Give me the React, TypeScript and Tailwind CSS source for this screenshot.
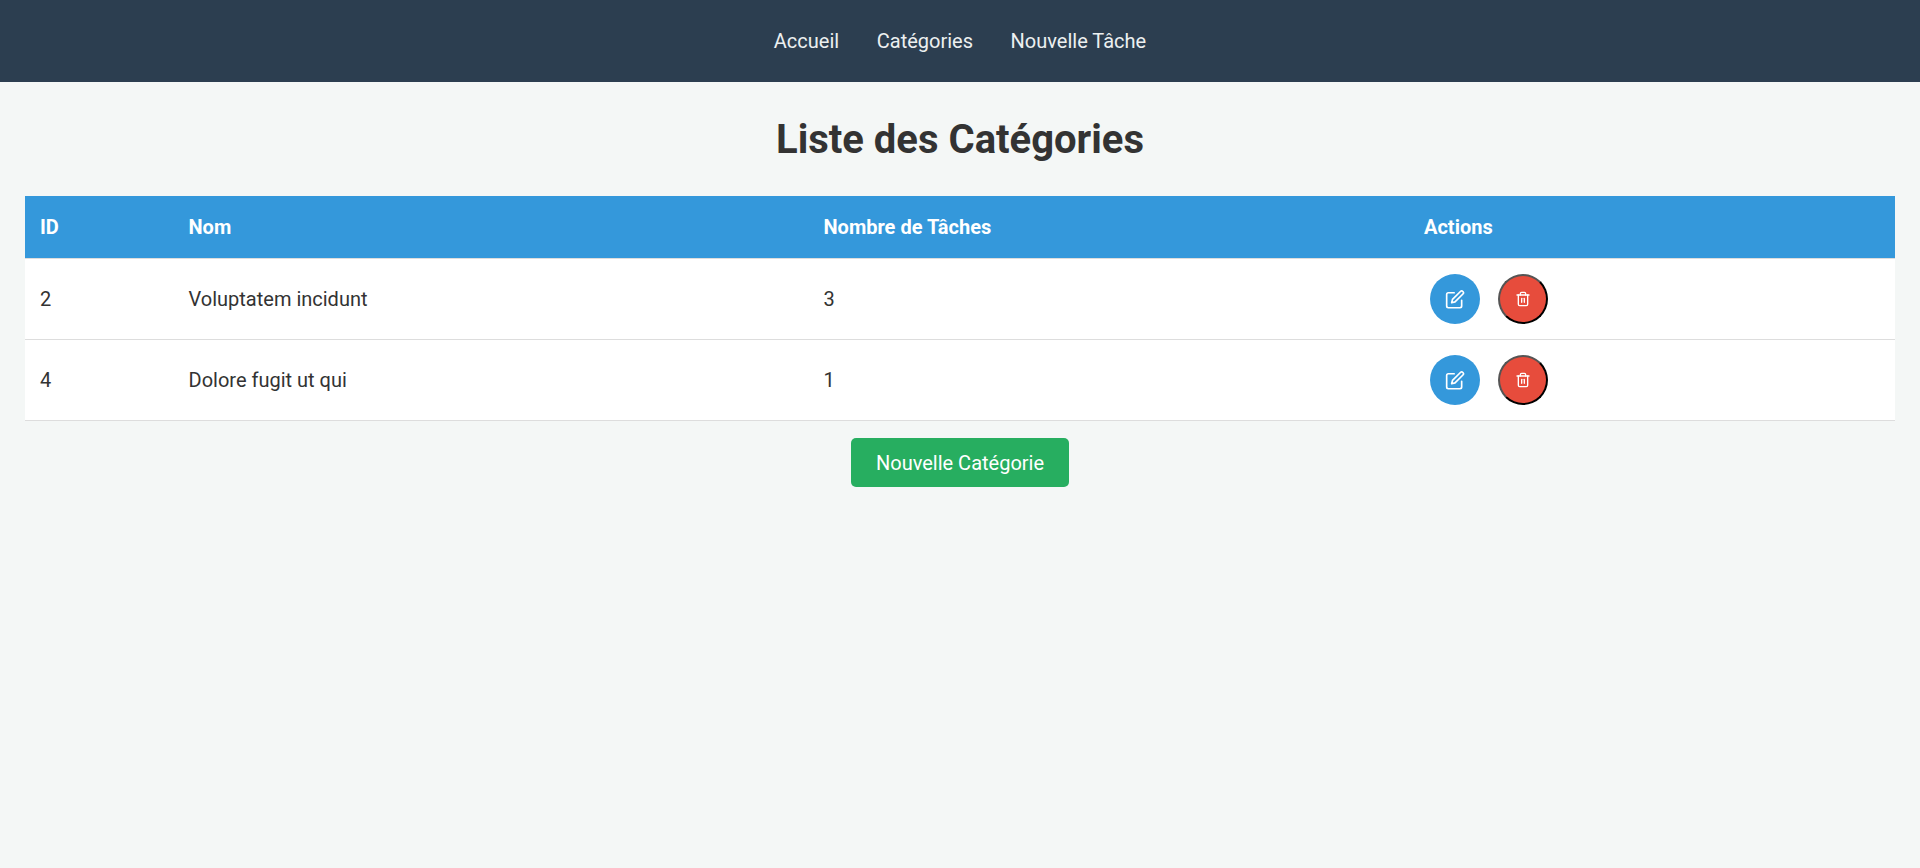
import { FiEdit, FiTrash2 } from "react-icons/fi";

const links = ["Accueil", "Catégories", "Nouvelle Tâche"];

const categories = [
  { id: 2, name: "Voluptatem incidunt", tasks: 3 },
  { id: 4, name: "Dolore fugit ut qui", tasks: 1 },
];

function Navbar() {
  return (
    <nav className="flex h-[82px] items-center justify-center gap-[37.6px] bg-[#2c3e50]">
      {links.map((label) => (
        <a key={label} href="#" className="text-[#ecf0f1]">
          {label}
        </a>
      ))}
    </nav>
  );
}

function RowActions() {
  return (
    <div className="flex gap-[18px] pl-[6px]">
      <a
        href="#"
        aria-label="Modifier"
        className="flex size-[50px] items-center justify-center rounded-full bg-[#3498db] text-white"
      >
        <FiEdit size={20} className="translate-y-[0.4px]" />
      </a>
      <button
        aria-label="Supprimer"
        className="flex size-[50px] items-center justify-center rounded-full border-2 border-black bg-[#e74c3c] text-white [border-style:outset]"
      >
        <FiTrash2 size={16} />
      </button>
    </div>
  );
}

export default function App() {
  return (
    <div className="min-h-screen bg-[#f4f7f6] font-['Roboto',sans-serif] text-[20px] leading-[32px] text-[#333]">
      <Navbar />
      <main className="flex flex-col items-center px-[25px] pt-[26px]">
        <h1 className="mb-[24px] text-[40px] leading-[64px] font-bold">Liste des Catégories</h1>
        <table className="w-full table-fixed border-separate border-spacing-0 bg-white text-left">
          <colgroup>
            <col className="w-[148px]" />
            <col className="w-[635px]" />
            <col className="w-[601px]" />
            <col />
          </colgroup>
          <thead>
            <tr className="h-[63px] bg-[#3498db] text-white">
              <th className="border-b border-[#ddd] px-[15px]">ID</th>
              <th className="border-b border-[#ddd] px-[15.5px]">Nom</th>
              <th className="border-b border-[#ddd] px-[15.5px]">Nombre de Tâches</th>
              <th className="border-b border-[#ddd] px-[15px]">Actions</th>
            </tr>
          </thead>
          <tbody>
            {categories.map((category) => (
              <tr key={category.id} className="h-[81px]">
                <td className="border-b border-[#ddd] px-[15px]">{category.id}</td>
                <td className="border-b border-[#ddd] px-[15.5px]">{category.name}</td>
                <td className="border-b border-[#ddd] px-[15.5px]">{category.tasks}</td>
                <td className="border-b border-[#ddd] px-[15px]">
                  <RowActions />
                </td>
              </tr>
            ))}
          </tbody>
        </table>
        <a
          href="#"
          className="mt-[17px] flex h-[49px] items-center rounded-[5px] bg-[#27ae60] px-[25px] pt-px text-white"
        >
          Nouvelle Catégorie
        </a>
      </main>
    </div>
  );
}
